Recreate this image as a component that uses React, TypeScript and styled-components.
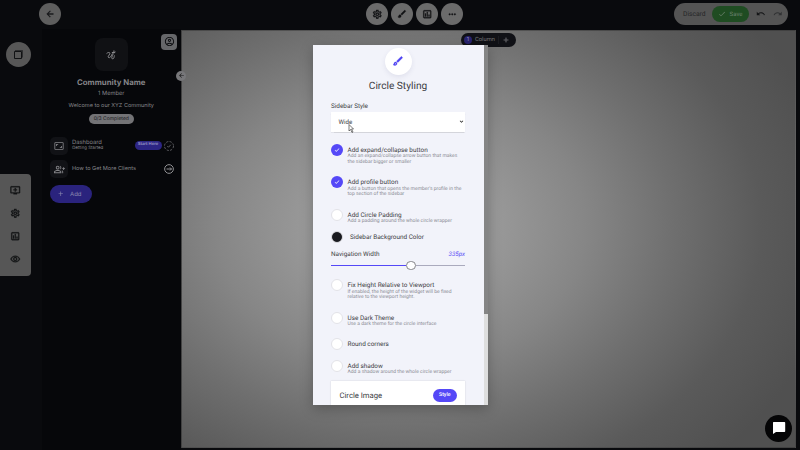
import React from 'react';
import styled, { createGlobalStyle, css } from 'styled-components';
import {
  MdArrowBack, MdOutlineSettings, MdOutlineBrush, MdBrush, MdMoreHoriz, MdOutlineAssessment,
  MdCheck, MdUndo, MdRedo, MdOutlineAccountCircle, MdOutlineAddToQueue, MdOutlineVisibility,
  MdOutlineAspectRatio, MdOutlineGroupAdd, MdAdd, MdExpandMore,
} from 'react-icons/md';

const Global = createGlobalStyle`
  * { box-sizing: border-box; }
  html, body { margin: 0; background: #08090c; overflow: hidden; text-rendering: geometricPrecision; }
  svg { display: block; flex: none; }
`;

const heavierIcon = css`
  path:not([fill='none']) {
    stroke: currentColor;
    stroke-width: 0.7px;
  }
`;

const Page = styled.div`
  position: relative;
  display: flex;
  flex-direction: column;
  width: 800px;
  height: 450px;
  overflow: hidden;
  background: #090a0d;
  color: #858589;
  font-family: Inter, sans-serif;
`;

const TopBar = styled.header`
  display: grid;
  grid-template-columns: 300px 1fr 300px;
  align-items: center;
  height: 29px;
  padding: 0 12px 1px 39px;
`;

const ToolGroup = styled.div`
  display: flex;
  gap: 3px;
  padding-left: 27px;
`;

const RoundTool = styled.div<{ $bg?: string; $size?: number }>`
  display: flex;
  align-items: center;
  justify-content: center;
  width: ${(p) => p.$size ?? 22}px;
  height: ${(p) => p.$size ?? 22}px;
  border-radius: 50%;
  background: ${(p) => p.$bg ?? '#6b6b6b'};
  color: #111214;
  ${heavierIcon}
`;

const SaveBar = styled.div`
  display: flex;
  align-items: center;
  justify-self: end;
  width: 114px;
  height: 22px;
  padding: 0 6px 0 9px;
  border-radius: 11px;
  background: #545454;
  color: #242527;
  font-family: Roboto, sans-serif;
  font-size: 6.7px;
`;

const SaveButton = styled.div`
  display: flex;
  align-items: center;
  gap: 4px;
  width: 38px;
  height: 16px;
  margin: 0 7px 0 6px;
  padding-left: 6px;
  border-radius: 8px;
  background: #1f4c22;
  color: #6b806d;
  font-size: 6px;
`;

const History = styled.div`
  display: flex;
  gap: 7px;
`;

const Body = styled.div`
  display: flex;
  flex: 1;
`;

const Rail = styled.aside`
  display: flex;
  flex-direction: column;
  width: 41.5px;
  padding-top: 12.5px;
`;

const RailTop = styled.div`
  display: flex;
  height: 132.5px;
  padding-left: 6px;
`;

const RailPanel = styled.div`
  display: flex;
  flex-direction: column;
  align-items: center;
  justify-content: space-between;
  width: 31px;
  height: 102px;
  padding: 10.5px 0 11px;
  border-radius: 0 4px 4px 0;
  background: #565656;
  color: #121315;
  ${heavierIcon}
`;

const Sidebar = styled.nav`
  position: relative;
  display: flex;
  flex-direction: column;
  align-items: center;
  width: 139.5px;
  padding-top: 9px;
  background: #06070a;
`;

const ProfileBadge = styled.div`
  position: absolute;
  top: 4.5px;
  right: 4px;
  display: flex;
  align-items: center;
  justify-content: center;
  width: 16px;
  height: 16px;
  border-radius: 4px;
  background: #66676a;
  color: #0c0d10;
`;

const CollapseBadge = styled.div`
  position: absolute;
  top: 41.5px;
  right: -5px;
  z-index: 1;
  display: flex;
  align-items: center;
  justify-content: center;
  width: 10px;
  height: 10px;
  border-radius: 50%;
  background: #77777a;
  color: #111;
`;

const Emblem = styled.div`
  display: flex;
  align-items: center;
  justify-content: center;
  width: 33px;
  height: 33px;
  border-radius: 8px;
  background: #101114;
`;

const Line = styled.div<{ $h: number; $size: number; $bold?: boolean; $top?: number }>`
  height: ${(p) => p.$h}px;
  margin-top: ${(p) => p.$top ?? 0}px;
  line-height: ${(p) => p.$h}px;
  font-size: ${(p) => p.$size}px;
  font-weight: ${(p) => (p.$bold ? 700 : 400)};
  white-space: nowrap;
`;

const Progress = styled.div`
  width: 45px;
  height: 10px;
  margin-top: 4px;
  border-radius: 5px;
  background: #737376;
  color: #17181b;
  font-size: 5px;
  line-height: 10px;
  text-align: center;
`;

const NavList = styled.div`
  display: flex;
  flex-direction: column;
  align-self: stretch;
  gap: 5.5px;
  padding: 12.5px 7.5px 0 8.5px;
`;

const NavRow = styled.div`
  display: flex;
  align-items: center;
  height: 18px;
`;

const NavIcon = styled.div`
  display: flex;
  align-items: center;
  justify-content: center;
  width: 18px;
  height: 18px;
  margin-right: 4px;
  border-radius: 5px;
  background: #111216;
`;

const NavText = styled.div`
  flex: 1;
`;

const StartTag = styled.div`
  width: 27px;
  height: 8.5px;
  margin-right: 2px;
  border-radius: 4.5px;
  background: #2c2584;
  color: #9e9cc4;
  font-size: 4.2px;
  font-weight: 600;
  line-height: 8.5px;
  text-align: center;
`;

const AddButton = styled.div`
  display: flex;
  align-items: center;
  gap: 6px;
  width: 42px;
  height: 18px;
  margin-top: 1.5px;
  padding-left: 6.5px;
  border-radius: 9px;
  background: #2a237d;
  color: #8d8bb0;
  font-size: 6px;
`;

const Canvas = styled.main`
  width: 615px;
  height: 418.5px;
  margin-top: 0.5px;
  border: 1px solid rgba(0, 0, 0, 0.18);
  border-width: 1px 1px 1.5px;
  background: radial-gradient(ellipse 440px 330px at 219px 195px,
    #9b9b9b 0%, #989898 22%, #868686 42%, #6f6f6f 62%, #5a5a5a 82%, #505050 100%);
`;

const ColumnPill = styled.div`
  display: flex;
  align-items: center;
  width: 55px;
  height: 14px;
  margin: 2px 0 0 279px;
  padding-left: 3px;
  border-radius: 7px;
  background: #101116;
  color: #77777b;
  font-size: 5.8px;
  font-family: Roboto, sans-serif;
  ${heavierIcon}
`;

const Count = styled.div`
  width: 8px;
  height: 8px;
  margin-right: 3px;
  border-radius: 50%;
  background: #29236f;
  color: #9d9bb8;
  font-size: 5.5px;
  line-height: 8px;
  text-align: center;
`;

const PlusCell = styled.div`
  display: flex;
  margin-left: 3.5px;
  padding-left: 3px;
  border-left: 1px solid #1b1c21;
`;

const Dialog = styled.section`
  position: absolute;
  top: 45px;
  left: 312.5px;
  display: flex;
  width: 175px;
  height: 360px;
  overflow: hidden;
  background: #f2f3fa;
  box-shadow: 0 4px 12px rgba(0, 0, 0, 0.25);
  color: #3c3d43;
  font-family: Roboto, sans-serif;
`;

const DialogBody = styled.div`
  display: flex;
  flex-direction: column;
  width: 171.5px;
  padding: 2.5px 19px 0 18.5px;
`;

const ScrollTrack = styled.div`
  width: 3.5px;
  background: #dedede;
`;

const ScrollThumb = styled.div`
  height: 268.5px;
  background: #858585;
`;

const BrushCircle = styled.div`
  display: flex;
  align-items: center;
  justify-content: center;
  align-self: center;
  flex: none;
  width: 27px;
  height: 27px;
  border-radius: 50%;
  background: #fff;
  box-shadow: 0 2px 5px rgba(70, 70, 120, 0.1);
  color: #4b40f2;
  ${heavierIcon}
`;

const Title = styled.h1`
  flex: none;
  height: 24px;
  margin: 0;
  font-size: 10.15px;
  font-weight: 400;
  line-height: 24.5px;
  text-align: center;
`;

const FieldLabel = styled.div`
  flex: none;
  height: 13px;
  font-size: 6.4px;
  line-height: 14.5px;
`;

const SelectBox = styled.div`
  display: flex;
  align-items: center;
  justify-content: space-between;
  flex: none;
  height: 20px;
  margin-bottom: 12px;
  padding: 0 0.5px 0 7.5px;
  background: #fff;
  box-shadow: 0 0.5px 1px rgba(0, 0, 0, 0.12);
  font-size: 6.2px;
`;

const Option = styled.div<{ $h: number }>`
  display: flex;
  flex: none;
  gap: 4.5px;
  height: ${(p) => p.$h}px;
`;

const OptionText = styled.div`
  padding-top: 2px;
  color: #8c8d96;
  font-size: 5.03px;
  line-height: 5.6px;
  white-space: nowrap;
`;

const OptionTitle = styled.div`
  height: 8.6px;
  color: #3c3d43;
  font-size: 6.4px;
  line-height: 8px;
`;

const Dot = styled.div<{ $on?: boolean }>`
  display: flex;
  align-items: center;
  justify-content: center;
  flex: none;
  width: 12px;
  height: 12px;
  border: ${(p) => (p.$on ? 'none' : '1px solid #e3e3e8')};
  border-radius: 50%;
  background: ${(p) => (p.$on ? '#5548f7' : '#fff')};
  color: #fff;
  ${heavierIcon}
`;

const ColorRow = styled.div`
  display: flex;
  align-items: center;
  flex: none;
  gap: 7px;
  height: 12px;
  margin-bottom: 4.5px;
  font-size: 6.4px;
`;

const Swatch = styled.div`
  width: 12px;
  height: 12px;
  border: 0.5px solid #d4d4d9;
  border-radius: 50%;
  background: radial-gradient(circle, #191a1f 5px, #fff 5.5px);
`;

const WidthRow = styled.div`
  display: flex;
  justify-content: space-between;
  flex: none;
  height: 13px;
  font-size: 6.4px;
  line-height: 12px;
`;

const WidthValue = styled.span`
  padding-top: 0.7px;
  color: #5a4ef5;
  font-size: 6.2px;
  font-style: italic;
`;

const Slider = styled.div`
  display: flex;
  align-items: center;
  flex: none;
  height: 10px;
  margin-bottom: 8.5px;
`;

const Track = styled.div<{ $w: number; $color: string }>`
  width: ${(p) => p.$w}px;
  height: 1.5px;
  background: ${(p) => p.$color};
`;

const Knob = styled.div`
  width: 9.5px;
  height: 9.5px;
  border: 1px solid #85858a;
  border-radius: 50%;
  background: #fff;
`;

const ImageCard = styled.div`
  display: flex;
  align-items: center;
  justify-content: space-between;
  flex: none;
  height: 30px;
  padding: 0 8.5px;
  background: #fff;
  box-shadow: 0 0 1.5px rgba(0, 0, 0, 0.16);
  font-size: 7.7px;
`;

const StyleButton = styled.div`
  width: 23.5px;
  height: 12.5px;
  border-radius: 6.5px;
  background: #5548f7;
  color: #fff;
  font-size: 5.2px;
  font-weight: 500;
  line-height: 12.5px;
  text-align: center;
`;

const Pointer = styled.svg`
  position: absolute;
  top: 123.5px;
  left: 348px;
`;

const ChatButton = styled.div`
  position: absolute;
  top: 414.5px;
  left: 765px;
  display: flex;
  align-items: center;
  justify-content: center;
  width: 27px;
  height: 27px;
  border-radius: 50%;
  background: #050506;
`;

type OptionItem = { title: string; lines: string[]; on?: boolean; h: number };

const options: OptionItem[] = [
  { title: 'Add expand/collapse button', lines: ['Add an expand/collapse arrow button that makes', 'the sidebar bigger or smaller'], on: true, h: 32.5 },
  { title: 'Add profile button', lines: ["Add a button that opens the member's profile in the", 'top section of the sidebar'], on: true, h: 32.5 },
  { title: 'Add Circle Padding', lines: ['Add a padding around the whole circle wrapper'], h: 22.5 },
];

const moreOptions: OptionItem[] = [
  { title: 'Fix Height Relative to Viewport', lines: ['If enabled, the height of the widget will be fixed', 'relative to the viewport height.'], h: 32.5 },
  { title: 'Use Dark Theme', lines: ['Use a dark theme for the circle interface'], h: 26.5 },
  { title: 'Round corners', lines: [], h: 21.5 },
  { title: 'Add shadow', lines: ['Add a shadow around the whole circle wrapper'], h: 21 },
];

const OptionList = ({ items }: { items: OptionItem[] }) => (
  <>
    {items.map((o) => (
      <Option key={o.title} $h={o.h}>
        <Dot $on={o.on}>{o.on && <MdCheck size={6} />}</Dot>
        <OptionText>
          <OptionTitle>{o.title}</OptionTitle>
          {o.lines.map((l) => <div key={l}>{l}</div>)}
        </OptionText>
      </Option>
    ))}
  </>
);

const Squiggle = () => (
  <svg width="10" height="10" viewBox="0 0 24 24" fill="none" stroke="#8a8a8d" strokeWidth="2.4" strokeLinecap="round">
    <path d="M2 8c3-3 8-3 7 1s-6 7-3 9 7-3 8-7 4-2 2 2-4 8 0 8 3-5 4-7" />
    <path d="M15 6h4M19 2v5M18 7l4-2" />
  </svg>
);

const Pages = () => (
  <svg width="11" height="11" viewBox="0 0 22 22" stroke="currentColor">
    <path d="M3 5h14v14H3z" fill="none" strokeWidth="2" />
    <path d="M4 3h15v14" fill="none" strokeWidth="1.2" />
  </svg>
);

const DashedCheck = () => (
  <svg width="10" height="10" viewBox="0 0 20 20" fill="none" stroke="#77777b" strokeWidth="1.5">
    <circle cx="10" cy="10" r="9" strokeDasharray="4.4 2.7" />
    <path d="M6.5 10l2.5 2.5 4.5-5" />
  </svg>
);

const CircledArrow = () => (
  <svg width="10" height="10" viewBox="0 0 20 20" fill="none" stroke="#929295" strokeWidth="2">
    <circle cx="10" cy="10" r="8.7" />
    <path d="M5 10h10M12 7l3 3-3 3" />
  </svg>
);

export default function App() {
  return (
    <Page>
      <Global />
      <TopBar>
        <RoundTool $bg="#5e5e5e"><MdArrowBack size={10} /></RoundTool>
        <ToolGroup>
          <RoundTool><MdOutlineSettings size={10.5} /></RoundTool>
          <RoundTool><MdBrush size={10} /></RoundTool>
          <RoundTool><MdOutlineAssessment size={10.5} /></RoundTool>
          <RoundTool><MdMoreHoriz size={10.5} /></RoundTool>
        </ToolGroup>
        <SaveBar>
          Discard
          <SaveButton><MdCheck size={8} />Save</SaveButton>
          <History><MdUndo size={9.5} color="#141517" /><MdRedo size={9.5} color="#303133" /></History>
        </SaveBar>
      </TopBar>
      <Body>
        <Rail>
          <RailTop><RoundTool $size={25} $bg="#575757"><Pages /></RoundTool></RailTop>
          <RailPanel>
            <MdOutlineAddToQueue size={10.5} />
            <MdOutlineSettings size={10.5} />
            <MdOutlineAssessment size={10.5} />
            <MdOutlineVisibility size={10.5} />
          </RailPanel>
        </Rail>
        <Sidebar>
          <ProfileBadge><MdOutlineAccountCircle size={11} /></ProfileBadge>
          <CollapseBadge><MdArrowBack size={7} /></CollapseBadge>
          <Emblem><Squiggle /></Emblem>
          <Line $h={17} $size={7.8} $top={3} $bold>Community Name</Line>
          <Line $h={6} $size={5.7}>1 Member</Line>
          <Line $h={8} $size={5.55} $top={5}>Welcome to our XYZ Community</Line>
          <Progress>0/3 Completed</Progress>
          <NavList>
            <NavRow>
              <NavIcon><MdOutlineAspectRatio size={10} /></NavIcon>
              <NavText>
                <Line $h={6.5} $size={5.8}>Dashboard</Line>
                <Line $h={5.5} $size={4.4}>Getting Started</Line>
              </NavText>
              <StartTag>Start Here</StartTag>
              <DashedCheck />
            </NavRow>
            <NavRow>
              <NavIcon><MdOutlineGroupAdd size={11} /></NavIcon>
              <NavText><Line $h={8} $size={5.55}>How to Get More Clients</Line></NavText>
              <CircledArrow />
            </NavRow>
            <AddButton><MdAdd size={7.5} />Add</AddButton>
          </NavList>
        </Sidebar>
        <Canvas>
          <ColumnPill>
            <Count>1</Count>Column<PlusCell><MdAdd size={8} /></PlusCell>
          </ColumnPill>
        </Canvas>
      </Body>
      <Dialog>
        <DialogBody>
          <BrushCircle><MdOutlineBrush size={12} /></BrushCircle>
          <Title>Circle Styling</Title>
          <FieldLabel>Sidebar Style</FieldLabel>
          <SelectBox>Wide<MdExpandMore size={7} color="#111" /></SelectBox>
          <OptionList items={options} />
          <ColorRow><Swatch />Sidebar Background Color</ColorRow>
          <WidthRow>Navigation Width<WidthValue>335px</WidthValue></WidthRow>
          <Slider>
            <Track $w={75} $color="#5548f7" />
            <Knob />
            <Track $w={49.5} $color="#aaaabd" />
          </Slider>
          <OptionList items={moreOptions} />
          <ImageCard>Circle Image<StyleButton>Style</StyleButton></ImageCard>
        </DialogBody>
        <ScrollTrack><ScrollThumb /></ScrollTrack>
      </Dialog>
      <Pointer width="6" height="9" viewBox="0 0 12 18">
        <path d="M2 1v13l3-3 3 6 2-1-3-6h4z" fill="#fff" stroke="#444" strokeWidth="1.4" />
      </Pointer>
      <ChatButton>
        <svg width="14" height="14" viewBox="0 0 14 14"><path d="M1.5 1h11q.7 0 .7.7v8.6q0 .7-.7.7H4L1 13V1.7q0-.7.5-.7z" fill="#fff" /></svg>
      </ChatButton>
    </Page>
  );
}
